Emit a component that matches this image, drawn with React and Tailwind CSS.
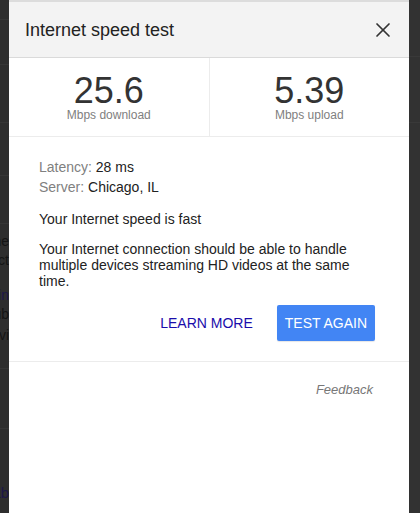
import { X } from "lucide-react";

function Stat({ value, label }) {
  return (
    <div className="flex-1 flex flex-col items-center pt-[14px]">
      <div className="text-[36px] leading-[37px] text-[#333]">{value}</div>
      <div className="text-[12px] leading-[13px] text-[#808080]">{label}</div>
    </div>
  );
}

function PageEdge() {
  // the page behind the dialog, only a sliver is visible
  return (
    <div className="w-[9px] shrink-0 bg-[#2e2e2e] overflow-hidden flex flex-col text-[14px] leading-[19px]">
      <div className="h-[20px] shrink-0 border-b border-[#363636]" />
      <div className="h-[45px] shrink-0 border-b border-[#363636]" />
      <div className="h-[58px] shrink-0 border-b border-[#363636]" />
      <div className="h-[53px] shrink-0 border-b border-[#363636]" />
      <div className="h-[48px] shrink-0 border-b border-[#363636]" />
      <div className="h-[8px] shrink-0" />
      <div className="flex justify-end whitespace-nowrap text-[#141414]">the</div>
      <div className="flex justify-end whitespace-nowrap text-[#141414]">ect</div>
      <div className="h-[16px] shrink-0" />
      <div className="flex justify-end whitespace-nowrap text-[#1c1748]">in</div>
      <div className="flex justify-end whitespace-nowrap text-[#141414]">sub</div>
      <div className="flex justify-end whitespace-nowrap text-[#141414] leading-[23px]">evi</div>
      <div className="h-[22px] shrink-0 border-b border-[#363636]" />
      <div className="h-[60px] shrink-0 border-b border-[#363636]" />
      <div className="h-[54px] shrink-0" />
      <div className="flex justify-end whitespace-nowrap text-[#1c1748] text-[15px]">ab</div>
    </div>
  );
}

export default function App() {
  return (
    <div
      className="w-[420px] h-[513px] flex overflow-hidden"
      style={{ fontFamily: '"Liberation Sans", Arial, sans-serif' }}
    >
      <PageEdge />

      <div className="w-[400px] shrink-0 bg-white flex flex-col border-t-2 border-[#dcdcdc]">
        {/* Header */}
        <div className="h-[56px] shrink-0 bg-[#f3f3f3] border-b border-[#dadada] flex items-center justify-between pl-[16px] pr-[14px] pt-[1px]">
          <span className="text-[18px] text-[#222]">Internet speed test</span>
          <X size={24} strokeWidth={1.7} color="#333" />
        </div>

        {/* Speeds */}
        <div className="h-[79px] shrink-0 flex border-b border-[#ececec]">
          <Stat value="25.6" label="Mbps download" />
          <div className="w-px bg-[#ececec]" />
          <Stat value="5.39" label="Mbps upload" />
        </div>

        {/* Details */}
        <div className="pt-[20px] pb-[20px] pl-[30px] pr-[34px] border-b border-[#ececec] text-[14px] text-[#222]">
          <div className="leading-[20px]">
            <span className="text-[#808080]">Latency: </span>28 ms
          </div>
          <div className="leading-[20px]">
            <span className="text-[#808080]">Server: </span>Chicago, IL
          </div>
          <div className="leading-[20px] mt-[12px]">Your Internet speed is fast</div>
          <p className="leading-[16px] mt-[12px]">
            Your Internet connection should be able to handle multiple devices streaming HD videos at the same time.
          </p>
          <div className="flex justify-end items-center gap-[16px] mt-[16px]">
            <button className="h-[36px] px-[8px] text-[14px] text-[#1a0dab]">LEARN MORE</button>
            <button className="h-[36px] px-[8px] text-[14px] text-white bg-[#4285f4] rounded-[2px] shadow-[0_1px_1px_rgba(0,0,0,0.1)]">
              TEST AGAIN
            </button>
          </div>
        </div>

        <div className="flex justify-end pt-[20px] pr-[36px]">
          <span className="italic text-[13px] leading-[16px] text-[#777]">Feedback</span>
        </div>
      </div>

      <div className="flex-1 bg-[#323232] flex flex-col">
        <div className="h-[57px] shrink-0 border-b border-[#393939]" />
        <div className="h-[66px] shrink-0 border-b border-[#393939]" />
      </div>
    </div>
  );
}
